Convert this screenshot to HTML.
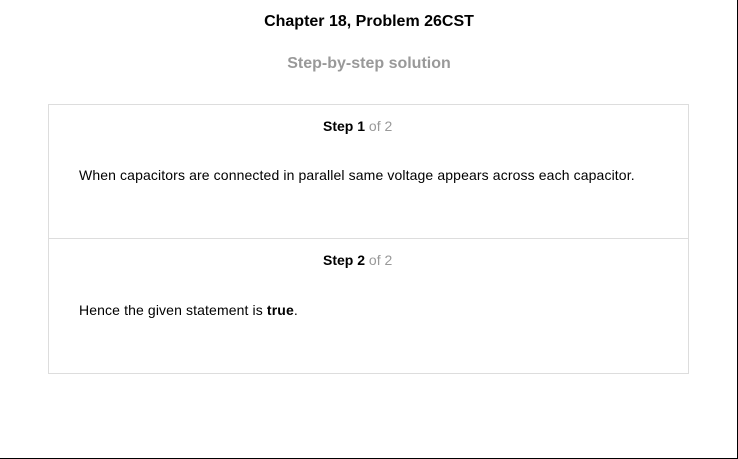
<!DOCTYPE html>
<html><head><style>
html,body{margin:0;padding:0;}
body{width:738px;height:459px;position:relative;background:#fff;font-family:"Liberation Sans",Arial,sans-serif;overflow:hidden;}
.frame{position:absolute;left:0;top:0;width:737px;height:458px;border-right:1px solid #000;border-bottom:1px solid #000;}
.t{position:absolute;left:0;width:738px;text-align:center;font-weight:bold;font-size:16px;}
.box{position:absolute;left:48px;top:104px;width:639px;height:268px;border:1px solid #ddd;}
.div{position:absolute;left:0;right:0;top:133px;border-top:1px solid #ddd;}
.s{position:absolute;left:274px;font-size:14px;font-weight:bold;color:#000;}
.s span{font-weight:normal;color:#999;}
.p{position:absolute;left:30px;font-size:14px;color:#000;letter-spacing:0.12px;white-space:nowrap;}
</style></head><body>
<div class="frame"></div>
<div class="t" style="top:13px;color:#000;">Chapter 18, Problem 26CST</div>
<div class="t" style="top:55px;color:#999;">Step-by-step solution</div>
<div class="box">
<div class="s" style="top:13px;">Step 1 <span>of 2</span></div>
<div class="p" style="top:62px;">When capacitors are connected in parallel same voltage appears across each capacitor.</div>
<div class="div"></div>
<div class="s" style="top:147px;">Step 2 <span>of 2</span></div>
<div class="p" style="top:197px;">Hence the given statement is <b>true</b>.</div>
</div>
</body></html>
